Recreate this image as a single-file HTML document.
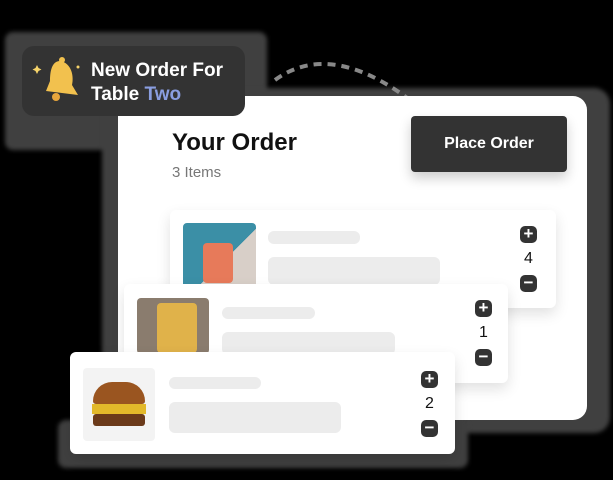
<!DOCTYPE html><html><head><style>
body{margin:0;width:613px;height:480px;background:#000;position:relative;overflow:hidden;font-family:"Liberation Sans",sans-serif}
div{position:absolute;box-sizing:border-box}
.halo{background:#404040;filter:blur(2px)}
.card{background:#fff;border-radius:6px;box-shadow:0 6px 14px rgba(0,0,0,.12)}
.img{border-radius:4px;overflow:hidden}
.sk{background:#ececec;border-radius:6px}
.btn{width:17px;height:17px;border-radius:5px;background:#333;color:#fff;font-weight:bold;font-size:17px;line-height:16px;text-align:center}
.num{font-size:16px;color:#111;width:17px;text-align:center}
</style></head><body>
<div class="halo" style="left:5px;top:32px;width:262px;height:118px;border-radius:8px"></div>
<div class="halo" style="left:102px;top:88px;width:508px;height:345px;border-radius:16px"></div>
<div class="halo" style="left:58px;top:420px;width:410px;height:48px;border-radius:8px"></div>
<svg style="position:absolute;left:270px;top:45px" width="150" height="60"><path d="M5 35 Q60 -5 140 55" stroke="#888" stroke-width="4" fill="none" stroke-dasharray="8 6"/></svg>
<div style="left:118px;top:96px;width:469px;height:324px;background:#fff;border-radius:14px"></div>
<div style="left:172px;top:129px;font-size:24px;font-weight:bold;color:#111">Your Order</div>
<div style="left:172px;top:164px;font-size:15px;color:#777">3 Items</div>
<div style="left:411px;top:116px;width:156px;height:56px;background:#333;border-radius:4px;color:#fff;font-weight:bold;font-size:16px;line-height:56px;text-align:center;box-shadow:0 6px 12px rgba(0,0,0,.2)">Place Order</div>

<div class="card" style="left:170px;top:210px;width:386px;height:98px"></div>
<div class="img" style="left:183px;top:223px;width:73px;height:70px;background:linear-gradient(135deg,#3b8fa6 55%,#d8cfc8 55%)"><div style="left:20px;top:20px;width:30px;height:40px;background:#e77a5a;border-radius:4px"></div></div>
<div class="sk" style="left:268px;top:231px;width:92px;height:13px"></div>
<div class="sk" style="left:268px;top:257px;width:172px;height:28px"></div>
<div class="btn" style="left:520px;top:226px">+</div>
<div class="num" style="left:520px;top:250px">4</div>
<div class="btn" style="left:520px;top:275px">−</div>

<div class="card" style="left:124px;top:284px;width:384px;height:99px"></div>
<div class="img" style="left:137px;top:298px;width:72px;height:56px;background:#8a7c6e"><div style="left:20px;top:5px;width:40px;height:50px;background:#e0b24a;border-radius:4px"></div></div>
<div class="sk" style="left:222px;top:307px;width:93px;height:12px"></div>
<div class="sk" style="left:222px;top:332px;width:173px;height:23px"></div>
<div class="btn" style="left:475px;top:300px">+</div>
<div class="num" style="left:475px;top:324px">1</div>
<div class="btn" style="left:475px;top:349px">−</div>

<div class="card" style="left:70px;top:352px;width:385px;height:102px"></div>
<div class="img" style="left:83px;top:368px;width:72px;height:73px;background:#f3f3f3"><div style="left:10px;top:14px;width:52px;height:22px;background:#9a5520;border-radius:26px 26px 4px 4px"></div><div style="left:9px;top:36px;width:54px;height:10px;background:#e3b92a"></div><div style="left:10px;top:46px;width:52px;height:12px;background:#6b3a1a;border-radius:3px"></div></div>
<div class="sk" style="left:169px;top:377px;width:92px;height:12px"></div>
<div class="sk" style="left:169px;top:402px;width:172px;height:31px"></div>
<div class="btn" style="left:421px;top:371px">+</div>
<div class="num" style="left:421px;top:395px">2</div>
<div class="btn" style="left:421px;top:420px">−</div>

<div style="left:22px;top:46px;width:223px;height:70px;background:#333;border-radius:12px"></div>
<svg style="position:absolute;left:32px;top:55px" width="50" height="50"><path d="M28 6 C40 8 42 22 40 30 L46 40 L14 36 L18 26 C18 16 20 6 28 6Z" fill="#f2c14e"/><circle cx="30" cy="5" r="3" fill="#f2c14e"/><circle cx="24" cy="42" r="4" fill="#e7a53c"/><path d="M5 10 l1.5 3 3 1.5 -3 1.5 -1.5 3 -1.5 -3 -3 -1.5 3 -1.5z" fill="#f5d36a"/><circle cx="46" cy="12" r="1.5" fill="#f5d36a"/></svg>
<div style="left:91px;top:59px;font-size:19px;font-weight:bold;color:#fff;line-height:24px">New Order For<br>Table <span style="color:#8a9ee0">Two</span></div>
</body></html>
